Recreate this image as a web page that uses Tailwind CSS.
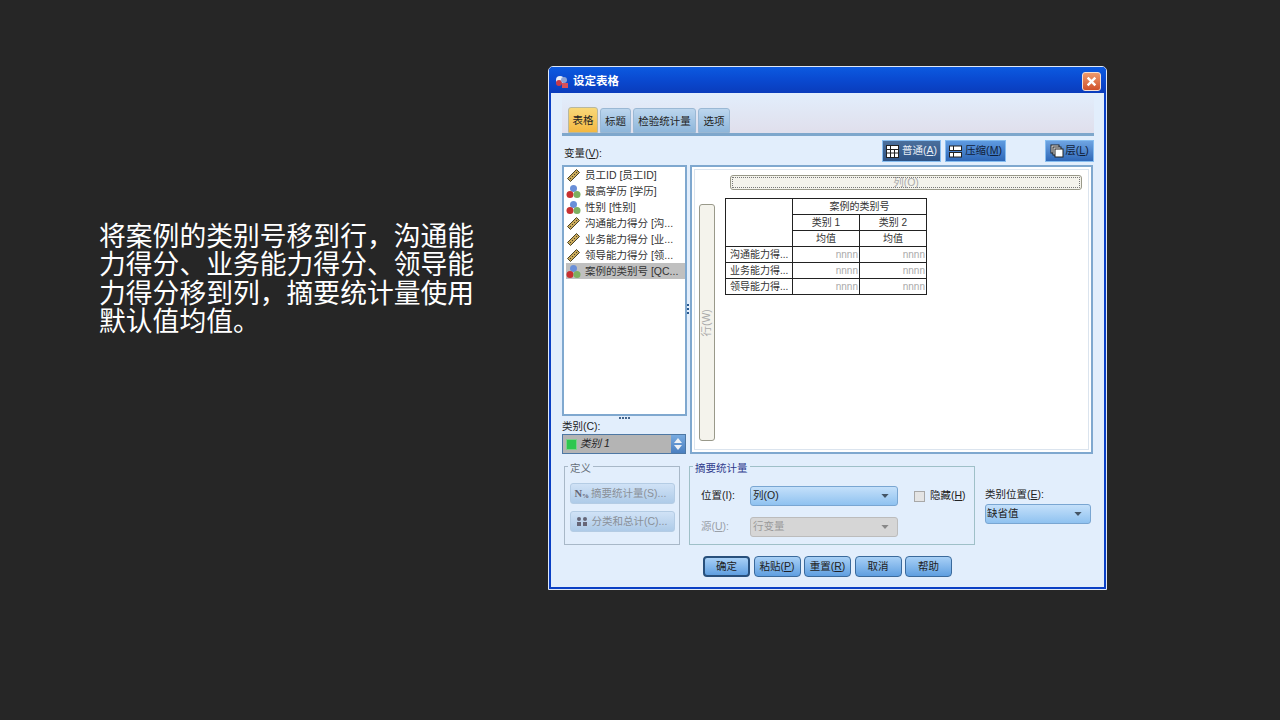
<!DOCTYPE html>
<html lang="zh">
<head>
<meta charset="utf-8">
<script src="https://cdn.jsdelivr.net/npm/@tailwindcss/browser@4"></script>
</head>
<body class="m-0">
<div class="w-[1280px] h-[720px] bg-[#262626] flex overflow-hidden font-['Liberation_Sans','Noto_Sans_CJK_SC',sans-serif]">
  <div class="w-[548px] shrink-0 pl-[99px] pt-[221px]">
    <p class="w-[380px] text-white text-[26.8px] leading-[28.4px] font-['Noto_Sans_CJK_SC',sans-serif]">将案例的类别号移到行，沟通能力得分、业务能力得分、领导能力得分移到列，摘要统计量使用默认值均值。</p>
  </div>
  <div class="mt-[66px] w-[559px] h-[524px] bg-[#0a3fc4] rounded-t-[5px] border border-[#dfe8f6] text-[10.5px] text-[#222] flex flex-col">
    <div class="h-[26px] shrink-0 flex items-center pt-[3px] pl-[6px] pr-[5px] bg-gradient-to-b from-[#0c5ae0] via-[#0a49d0] to-[#0a3cbc] rounded-t-[4px]">
      <svg width="14" height="14" viewBox="0 0 14 14"><circle cx="5" cy="5" r="4" fill="#e8eef8"/><circle cx="4" cy="8" r="3" fill="#c83a4a"/><circle cx="9" cy="5" r="3" fill="#8aa2d8"/><rect x="7" y="8" width="6" height="5" fill="#d8505a"/></svg>
      <span class="ml-[4px] text-white text-[11.5px] font-semibold">设定表格</span>
      <div class="ml-auto w-[19px] h-[19px] rounded-[3px] bg-gradient-to-b from-[#ef9a6c] to-[#d0502a] border border-[#f4e0d4] flex items-center justify-center">
        <svg width="11" height="11" viewBox="0 0 10 10"><path d="M1.500 1.500 8.500 8.500M8.500 1.500 1.500 8.500" stroke="#fff" stroke-width="2.200"/></svg>
      </div>
    </div>
    <div class="mx-[2px] mb-[2px] flex-1 bg-[#e2eefc] pl-[11px] pr-[10px] flex flex-col">
      <div class="h-[40px] bg-gradient-to-b from-[#e2eefc] to-[#e0dfec] flex items-end pl-[6px] gap-[2px] shrink-0">
        <div class="h-[26px] w-[30px] pt-[2px] rounded-t-[3px] bg-gradient-to-b from-[#f8d878] to-[#f4b840] border border-[#b8b8a0] flex items-center justify-center text-[10.5px]">表格</div>
        <div class="h-[25px] w-[31px] pt-[2px] rounded-t-[3px] bg-gradient-to-b from-[#bcd6ee] to-[#8eb6da] border border-[#9ab8d4] flex items-center justify-center text-[10.5px]">标题</div>
        <div class="h-[25px] w-[63px] pt-[2px] rounded-t-[3px] bg-gradient-to-b from-[#bcd6ee] to-[#8eb6da] border border-[#9ab8d4] flex items-center justify-center text-[10.5px]">检验统计量</div>
        <div class="h-[25px] w-[32px] pt-[2px] rounded-t-[3px] bg-gradient-to-b from-[#bcd6ee] to-[#8eb6da] border border-[#9ab8d4] flex items-center justify-center text-[10.5px]">选项</div>
      </div>
      <div class="h-[3px] bg-[#7ea7cc] shrink-0"></div>
      <div class="h-[29px] flex items-end shrink-0 relative">
        <span class="ml-[2px] mb-[6px] leading-[12px]">变量(<u>V</u>):</span>
        <div class="ml-auto flex items-center self-end mb-[3px]">
          <div class="h-[22px] w-[59px] bg-gradient-to-b from-[#4a6f9c] to-[#2f5588] border border-[#86bdf0] flex items-center justify-center gap-[3px] text-[#e8eef6]">
            <svg width="13" height="13" viewBox="0 0 13 13"><rect x=".5" y=".5" width="12" height="12" fill="#fff" stroke="#222"/><path d="M4.500 1V12M1 4.500H12M1 8H12M8.500 4.500V12" stroke="#222"/></svg><span>普通(<u>A</u>)</span>
          </div>
          <div class="ml-[4px] h-[22px] w-[61px] bg-gradient-to-b from-[#5e9ae0] to-[#2f68b8] border border-[#86bdf0] flex items-center justify-center gap-[3px] text-[#10203a]">
            <svg width="13" height="13" viewBox="0 0 13 13"><rect x=".5" y="1" width="12" height="4.500" fill="#fff" stroke="#222"/><rect x=".5" y="7.500" width="12" height="4.500" fill="#fff" stroke="#222"/><path d="M4.500 1V5.500M4.500 7.500V12" stroke="#222"/></svg><span>压缩(<u>M</u>)</span>
          </div>
          <div class="ml-[39px] h-[22px] w-[49px] bg-gradient-to-b from-[#6ea4e2] to-[#2f68b8] border border-[#86bdf0] flex items-center justify-center gap-[1px] text-[#10203a]">
            <svg width="14" height="14" viewBox="0 0 14 14"><rect x="1" y="1" width="8" height="8" fill="#eee" stroke="#222"/><rect x="3" y="3" width="8" height="8" fill="#eee" stroke="#222"/><rect x="5" y="5" width="8" height="8" fill="#fff" stroke="#222"/></svg><span>层(<u>L</u>)</span>
          </div>
        </div>
      </div>
      <div class="flex h-[289px] shrink-0">
        <div class="w-[125px] shrink-0 flex flex-col">
          <div class="h-[251px] bg-white border-2 border-[#7fa8cf] pt-[0px] pl-[2px] flex flex-col text-[10.5px] leading-[16px] text-[#333] relative">
            <div class="h-[16px] flex items-center gap-[4px]"><svg width="15" height="15" viewBox="0 0 15 15"><path d="M1.500 10.500 10.500 1.500l3 3-9 9z" fill="#c9a95a" stroke="#4a4226"/><path d="M4 10l1 1M6 8l1 1M8 6l1 1M10 4l1 1" stroke="#4a4226"/></svg><span>员工ID [员工ID]</span></div>
            <div class="h-[16px] flex items-center gap-[4px]"><svg width="15" height="15" viewBox="0 0 15 15"><circle cx="7.500" cy="4.500" r="3.500" fill="#6a8fd8"/><circle cx="4" cy="10.500" r="3.500" fill="#c83030"/><circle cx="11" cy="10.500" r="3.500" fill="#7cb060"/></svg><span>最高学历 [学历]</span></div>
            <div class="h-[16px] flex items-center gap-[4px]"><svg width="15" height="15" viewBox="0 0 15 15"><circle cx="7.500" cy="4.500" r="3.500" fill="#6a8fd8"/><circle cx="4" cy="10.500" r="3.500" fill="#c83030"/><circle cx="11" cy="10.500" r="3.500" fill="#7cb060"/></svg><span>性别 [性别]</span></div>
            <div class="h-[16px] flex items-center gap-[4px]"><svg width="15" height="15" viewBox="0 0 15 15"><path d="M1.500 10.500 10.500 1.500l3 3-9 9z" fill="#c9a95a" stroke="#4a4226"/><path d="M4 10l1 1M6 8l1 1M8 6l1 1M10 4l1 1" stroke="#4a4226"/></svg><span>沟通能力得分 [沟...</span></div>
            <div class="h-[16px] flex items-center gap-[4px]"><svg width="15" height="15" viewBox="0 0 15 15"><path d="M1.500 10.500 10.500 1.500l3 3-9 9z" fill="#c9a95a" stroke="#4a4226"/><path d="M4 10l1 1M6 8l1 1M8 6l1 1M10 4l1 1" stroke="#4a4226"/></svg><span>业务能力得分 [业...</span></div>
            <div class="h-[16px] flex items-center gap-[4px]"><svg width="15" height="15" viewBox="0 0 15 15"><path d="M1.500 10.500 10.500 1.500l3 3-9 9z" fill="#c9a95a" stroke="#4a4226"/><path d="M4 10l1 1M6 8l1 1M8 6l1 1M10 4l1 1" stroke="#4a4226"/></svg><span>领导能力得分 [领...</span></div>
            <div class="h-[16px] w-[119px] flex items-center gap-[4px] bg-[#c0c0c0]"><svg width="15" height="15" viewBox="0 0 15 15"><circle cx="7.500" cy="4.500" r="3.500" fill="#6a8fd8"/><circle cx="4" cy="10.500" r="3.500" fill="#c83030"/><circle cx="11" cy="10.500" r="3.500" fill="#7cb060"/></svg><span>案例的类别号 [QC...</span></div>
          </div>
          <div class="h-[3px] flex justify-center gap-[1px] items-center"><i class="w-[2px] h-[2px] bg-[#44658c]"></i><i class="w-[2px] h-[2px] bg-[#44658c]"></i><i class="w-[2px] h-[2px] bg-[#44658c]"></i><i class="w-[2px] h-[2px] bg-[#44658c]"></i></div>
          <div class="h-[15px] leading-[15px] text-[10.5px]">类别(C):</div>
          <div class="h-[20px] w-[124px] bg-[#b4b4b4] border border-[#4e78a4] flex items-center pl-[3px] italic">
            <div class="w-[11px] h-[11px] bg-[#2fc74f] border border-[#7fd08c] mr-[3px]"></div><span>类别 1</span>
            <div class="ml-auto w-[14px] h-[18px] bg-gradient-to-b from-[#79abe0] to-[#4a7fc0] flex flex-col items-center justify-center gap-[2px]">
              <svg width="8" height="5" viewBox="0 0 8 5"><path d="M0 5 4 0l4 5z" fill="#eef2f6"/></svg><svg width="8" height="5" viewBox="0 0 8 5"><path d="M0 0h8L4 5z" fill="#eef2f6"/></svg>
            </div>
          </div>
        </div>
        <div class="w-[3px] shrink-0 flex flex-col justify-center gap-[2px] pb-[2px]"><i class="w-[2px] h-[2px] bg-[#2a5a90]"></i><i class="w-[2px] h-[2px] bg-[#2a5a90]"></i><i class="w-[2px] h-[2px] bg-[#2a5a90]"></i></div>
        <div class="w-[403px] shrink-0 border-2 border-[#7fa8cf] bg-white p-[2px]">
          <div class="h-full border border-[#dbe4ee] pl-[4px] pt-[5px] pr-[8px] flex flex-col">
            <div class="ml-[31px] h-[15px] w-[352px] rounded-[3px] border border-[#99998a] bg-[#f4f3ec] outline-1 outline-dotted -outline-offset-3 outline-[#777] flex items-center justify-center text-[10.500px] text-[#aaa]">列(O)</div>
            <div class="flex flex-1 mt-[6px]">
              <div class="w-[16px] h-[237px] mt-[8px] rounded-[3px] border border-[#99998a] bg-[#f4f3ec] flex items-center justify-center text-[#aaa] shrink-0"><span class="-rotate-90 whitespace-nowrap text-[10.500px]">行(W)</span></div>
              <table class="ml-[10px] mt-[2px] h-fit border-collapse text-[10px] text-[#333] leading-none">
                <tbody>
                  <tr class="h-[16px]"><td rowspan="3" class="w-[67px] border border-[#222]"></td><td colspan="2" class="border border-[#222] text-center">案例的类别号</td></tr>
                  <tr class="h-[16px]"><td class="w-[67px] border border-[#222] text-center">类别 1</td><td class="w-[67px] border border-[#222] text-center">类别 2</td></tr>
                  <tr class="h-[16px]"><td class="border border-[#222] text-center">均值</td><td class="border border-[#222] text-center">均值</td></tr>
                  <tr class="h-[16px]"><td class="border border-[#222] pl-[4px]">沟通能力得...</td><td class="border border-[#222] text-right pr-[1px] text-[#aaa]">nnnn</td><td class="border border-[#222] text-right pr-[1px] text-[#aaa]">nnnn</td></tr>
                  <tr class="h-[16px]"><td class="border border-[#222] pl-[4px]">业务能力得...</td><td class="border border-[#222] text-right pr-[1px] text-[#aaa]">nnnn</td><td class="border border-[#222] text-right pr-[1px] text-[#aaa]">nnnn</td></tr>
                  <tr class="h-[16px]"><td class="border border-[#222] pl-[4px]">领导能力得...</td><td class="border border-[#222] text-right pr-[1px] text-[#aaa]">nnnn</td><td class="border border-[#222] text-right pr-[1px] text-[#aaa]">nnnn</td></tr>
                </tbody>
              </table>
            </div>
          </div>
        </div>
      </div>
      <div class="flex h-[79px] mt-[12px] shrink-0">
        <div class="ml-[2px] w-[116px] h-full border border-[#a8b8c8] relative flex flex-col items-center pt-[16px] gap-[7px] text-[#8a9098] text-[10.500px]">
          <span class="absolute -top-[5px] left-[3px] px-[2px] bg-[#e2eefc] text-[#666e78] leading-[12px]">定义</span>
          <div class="w-[105px] h-[21px] rounded-[3px] bg-gradient-to-b from-[#d0e2f6] to-[#aecbe8] border border-[#b4cce4] flex items-center pl-[4px] gap-[2px] whitespace-nowrap"><span class="font-['Liberation_Serif',serif] font-bold text-[#667]">N<sub class="text-[7px]">%</sub></span><span>摘要统计量(S)...</span></div>
          <div class="w-[105px] h-[21px] rounded-[3px] bg-gradient-to-b from-[#d0e2f6] to-[#aecbe8] border border-[#b4cce4] flex items-center pl-[5px] gap-[4px] whitespace-nowrap"><svg width="12" height="11" viewBox="0 0 12 11"><rect x="1" y="1" width="4" height="4" rx="2" fill="#667"/><rect x="7" y="1" width="4" height="4" rx="2" fill="#667"/><rect x="1" y="6" width="4" height="4" fill="#667"/><rect x="7" y="6" width="4" height="4" fill="#667"/></svg><span>分类和总计(C)...</span></div>
        </div>
        <div class="ml-[9px] w-[286px] h-full border border-[#9fc0c8] relative text-[10.500px]">
          <span class="absolute -top-[5px] left-[3px] px-[2px] bg-[#e2eefc] text-[#2f3a8c] leading-[12px]">摘要统计量</span>
          <div class="flex items-center pl-[11px] mt-[19px] h-[20px]">
            <span class="w-[49px]">位置(I):</span>
            <div class="w-[148px] h-[20px] rounded-[3px] bg-gradient-to-b from-[#c4e0fa] to-[#8fc2f0] border border-[#79a6d2] flex items-center pl-[2px] pr-[8px] justify-between"><span>列(O)</span><svg width="8" height="4" viewBox="0 0 9 5"><path d="M0 0h9L4.500 5z" fill="#456"/></svg></div>
            <div class="ml-[16px] w-[11px] h-[11px] border border-[#a8a8a8] bg-[#e4e4e4]"></div>
            <span class="ml-[5px]">隐藏(<u>H</u>)</span>
          </div>
          <div class="flex items-center pl-[11px] mt-[11px] h-[20px]">
            <span class="w-[49px] text-[#9aa0a8]">源(<u>U</u>):</span>
            <div class="w-[148px] h-[20px] rounded-[3px] bg-[#d6d6d6] border border-[#bcbcbc] flex items-center pl-[2px] pr-[8px] justify-between text-[#9a9a9a]"><span>行变量</span><svg width="8" height="4" viewBox="0 0 9 5"><path d="M0 0h9L4.500 5z" fill="#888"/></svg></div>
          </div>
        </div>
        <div class="ml-[10px] w-[106px] pt-[22px]">
          <div class="h-[12px] leading-[12px]">类别位置(<u>E</u>):</div>
          <div class="mt-[4px] h-[20px] rounded-[3px] bg-gradient-to-b from-[#c4e0fa] to-[#8fc2f0] border border-[#79a6d2] flex items-center pl-[1px] pr-[8px] justify-between"><span>缺省值</span><svg width="8" height="4" viewBox="0 0 9 5"><path d="M0 0h9L4.500 5z" fill="#456"/></svg></div>
        </div>
      </div>
      <div class="flex mt-[11px] ml-[141px] gap-[3.500px]">
        <div class="w-[47px] h-[21px] rounded-[4px] bg-gradient-to-b from-[#a8d0f6] to-[#5f9fe0] border-2 border-[#28507c] flex items-center justify-center">确定</div>
        <div class="w-[47px] h-[21px] rounded-[4px] bg-gradient-to-b from-[#a8d0f6] to-[#5f9fe0] border border-[#3a6a9c] flex items-center justify-center">粘贴(<u>P</u>)</div>
        <div class="w-[47px] h-[21px] rounded-[4px] bg-gradient-to-b from-[#a8d0f6] to-[#5f9fe0] border border-[#3a6a9c] flex items-center justify-center">重置(<u>R</u>)</div>
        <div class="w-[47px] h-[21px] rounded-[4px] bg-gradient-to-b from-[#a8d0f6] to-[#5f9fe0] border border-[#3a6a9c] flex items-center justify-center">取消</div>
        <div class="w-[47px] h-[21px] rounded-[4px] bg-gradient-to-b from-[#a8d0f6] to-[#5f9fe0] border border-[#3a6a9c] flex items-center justify-center">帮助</div>
      </div>
    </div>
  </div>
</div>
</body>
</html>
